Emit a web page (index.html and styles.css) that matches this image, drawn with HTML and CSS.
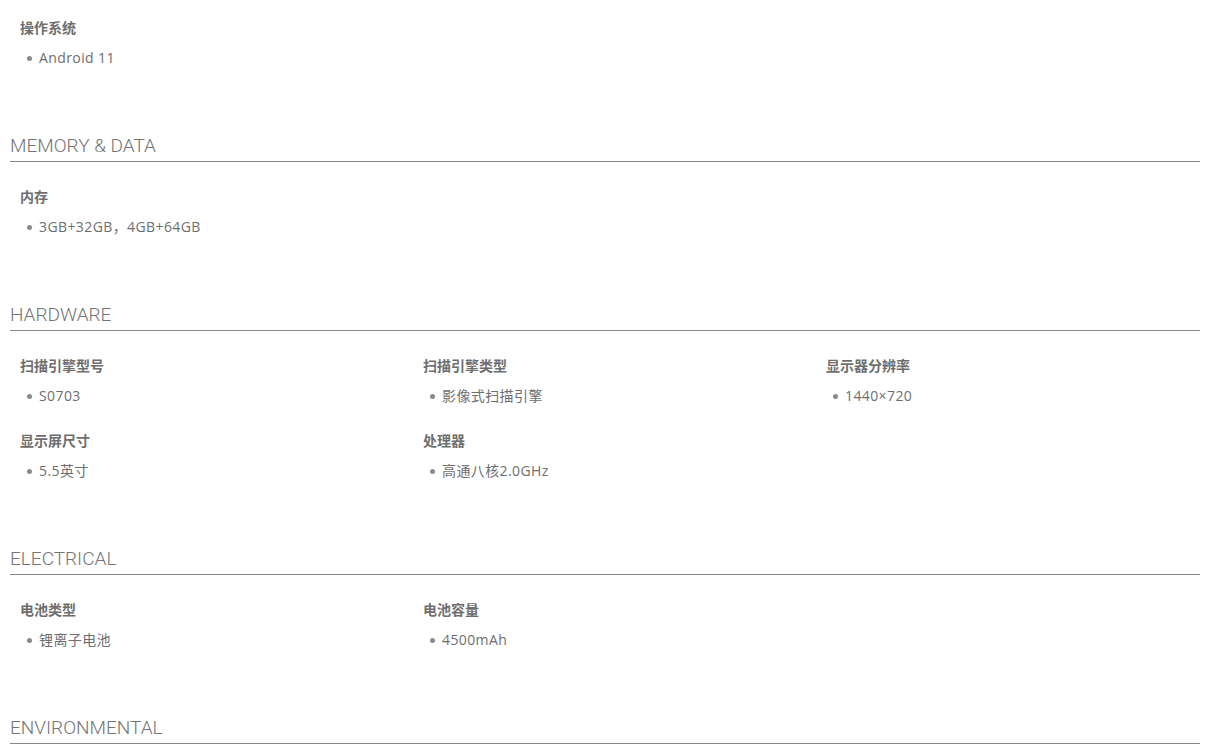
FILE: index.html
```html
<!DOCTYPE html>
<html lang="zh-CN">
<head>
<meta charset="utf-8">
<title>Specifications</title>
<link rel="stylesheet" href="styles.css">
</head>
<body>
<div class="page">
  <section class="section first">
    <div class="grid">
      <div class="item">
        <div class="label">操作系统</div>
        <ul class="values"><li>Android 11</li></ul>
      </div>
    </div>
  </section>

  <section class="section">
    <h2 class="heading">MEMORY &amp; DATA</h2>
    <div class="grid">
      <div class="item">
        <div class="label">内存</div>
        <ul class="values"><li>3GB+32GB，4GB+64GB</li></ul>
      </div>
    </div>
  </section>

  <section class="section">
    <h2 class="heading">HARDWARE</h2>
    <div class="grid">
      <div class="item">
        <div class="label">扫描引擎型号</div>
        <ul class="values"><li>S0703</li></ul>
      </div>
      <div class="item">
        <div class="label">扫描引擎类型</div>
        <ul class="values"><li>影像式扫描引擎</li></ul>
      </div>
      <div class="item">
        <div class="label">显示器分辨率</div>
        <ul class="values"><li>1440×720</li></ul>
      </div>
      <div class="item">
        <div class="label">显示屏尺寸</div>
        <ul class="values"><li>5.5英寸</li></ul>
      </div>
      <div class="item">
        <div class="label">处理器</div>
        <ul class="values"><li>高通八核2.0GHz</li></ul>
      </div>
    </div>
  </section>

  <section class="section">
    <h2 class="heading">ELECTRICAL</h2>
    <div class="grid">
      <div class="item">
        <div class="label">电池类型</div>
        <ul class="values"><li>锂离子电池</li></ul>
      </div>
      <div class="item">
        <div class="label">电池容量</div>
        <ul class="values"><li>4500mAh</li></ul>
      </div>
    </div>
  </section>

  <section class="section">
    <h2 class="heading">ENVIRONMENTAL</h2>
  </section>
</div>
</body>
</html>
```

FILE: styles.css
```css
html, body {
  margin: 0;
  padding: 0;
  background: #ffffff;
}

body {
  font-family: "Open Sans", "Noto Sans CJK SC", sans-serif;
  color: #707070;
  font-size: 14px;
}

.page {
  width: 1190px;
  padding: 17px 0 0 10px;
}

.heading {
  margin: 0;
  font-family: "Roboto", "Noto Sans CJK SC", sans-serif;
  font-weight: 300;
  font-size: 19px;
  line-height: 22px;
  color: #747474;
  padding-bottom: 4px;
  border-bottom: 1px solid #888888;
}

.grid {
  display: grid;
  grid-template-columns: repeat(3, 403px);
  row-gap: 24px;
  padding: 24px 0 67px 10px;
}

.section.first .grid {
  padding-top: 0;
}

.label {
  font-family: "Noto Sans CJK SC", "Open Sans", sans-serif;
  font-weight: 700;
  font-size: 14px;
  line-height: 20px;
  color: #6e6e6e;
}

.values {
  list-style: none;
  margin: 11px 0 0;
  padding: 0;
}

.values li {
  display: flex;
  align-items: center;
  line-height: 20px;
  font-size: 14px;
  letter-spacing: 0.4px;
  color: #6e6e6e;
}

.values li::before {
  content: "";
  width: 5px;
  height: 5px;
  border-radius: 50%;
  background: #8a8a8a;
  margin: 0 7px 0 7px;
  flex: none;
}
```
